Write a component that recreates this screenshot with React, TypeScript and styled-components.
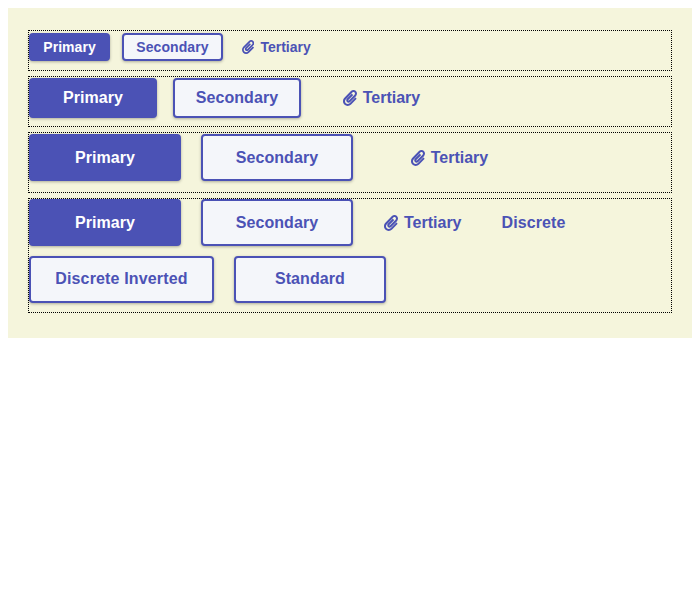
import React from "react";
import styled, { createGlobalStyle, css } from "styled-components";
import { FaPaperclip } from "react-icons/fa";

const GlobalStyle = createGlobalStyle`
  body { margin: 8px; background: #fff; }
  * { box-sizing: border-box; }
`;

const Panel = styled.main`
  height: 330px;
  padding: 22px 20px;
  display: flex;
  flex-direction: column;
  gap: 5px;
  background: #f5f5dc;
`;

const Row = styled.section<{ $height: number; $gap: number; $top?: number }>`
  height: ${(p) => p.$height}px;
  padding-top: ${(p) => p.$top ?? 0}px;
  border: 1px dotted #000;
  display: flex;
  flex-wrap: wrap;
  align-items: flex-start;
  align-content: flex-start;
  gap: 9.7px ${(p) => p.$gap}px;
`;

type Size = "small" | "medium" | "large";
type Kind = "primary" | "outlined" | "plain";

const sizes = {
  small: css`height: 28px; font-size: 14px; padding: 0 12.25px;`,
  medium: css`height: 40px; min-width: 128px; font-size: 16px; padding: 0 14px;`,
  large: css`height: 47px; min-width: 152px; font-size: 16px; padding: 0 24.25px;`,
};

const compactPadding = { small: 4.3, medium: 8, large: 8 };

const raised = css`
  border-color: #4b52b5;
  box-shadow: 0 1px 3px rgba(0, 0, 0, 0.3);
`;

const kinds = {
  primary: css`${raised} background: #4b52b5; color: #fff;`,
  outlined: css`${raised} background: #f4f6fa; color: #4b52b5;`,
  plain: css`background: transparent; border-color: transparent; color: #4b52b5;`,
};

interface ButtonProps {
  $size: Size;
  $kind: Kind;
  $compact?: boolean;
  $tracking?: number;
}

const Button = styled.button<ButtonProps>`
  display: inline-flex;
  align-items: center;
  justify-content: center;
  gap: 6px;
  margin: 0;
  border: 2px solid;
  border-radius: 4px;
  font-family: "Liberation Sans", Arial, sans-serif;
  font-weight: 700;
  letter-spacing: ${(p) => p.$tracking ?? 0.05}px;
  line-height: normal;
  white-space: nowrap;
  ${(p) => sizes[p.$size]}
  ${(p) => kinds[p.$kind]}
  ${(p) => p.$compact && css`min-width: 0; padding: 0 ${compactPadding[p.$size]}px;`}
`;

const Clip = styled(FaPaperclip)`
  flex: none;
  width: 0.875em;
  height: 1em;
  margin-left: 1px;
`;

const Tertiary = ({ size, compact }: { size: Size; compact?: boolean }) => (
  <Button $size={size} $kind="plain" $compact={compact} $tracking={0}>
    <Clip />
    Tertiary
  </Button>
);

export default function App() {
  return (
    <>
      <GlobalStyle />
      <Panel>
        <Row $height={41} $gap={12} $top={2}>
          <Button $size="small" $kind="primary">Primary</Button>
          <Button $size="small" $kind="outlined" $tracking={0.09}>Secondary</Button>
          <Tertiary size="small" compact />
        </Row>
        <Row $height={51} $gap={16} $top={1}>
          <Button $size="medium" $kind="primary">Primary</Button>
          <Button $size="medium" $kind="outlined">Secondary</Button>
          <Tertiary size="medium" />
        </Row>
        <Row $height={61} $gap={20} $top={1}>
          <Button $size="large" $kind="primary">Primary</Button>
          <Button $size="large" $kind="outlined">Secondary</Button>
          <Tertiary size="large" />
        </Row>
        <Row $height={115} $gap={20}>
          <Button $size="large" $kind="primary">Primary</Button>
          <Button $size="large" $kind="outlined">Secondary</Button>
          <Tertiary size="large" compact />
          <Button $size="large" $kind="plain" $compact $tracking={0.1}>Discrete</Button>
          <Button $size="large" $kind="outlined" $tracking={0.15}>Discrete Inverted</Button>
          <Button $size="large" $kind="outlined">Standard</Button>
        </Row>
      </Panel>
    </>
  );
}
